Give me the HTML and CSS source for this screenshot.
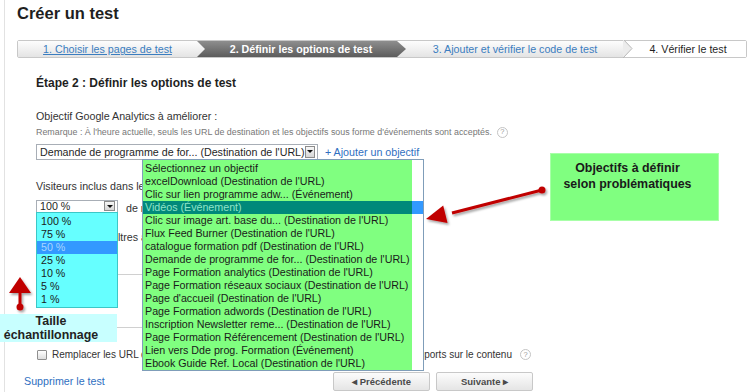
FILE: index.html
```html
<!DOCTYPE html>
<html lang="fr">
<head>
<meta charset="utf-8">
<title>Créer un test</title>
<link rel="stylesheet" href="styles.css">
</head>
<body>
<div class="page">
  <div class="head">
    <h1 class="title">Créer un test</h1>
    <div class="steps">
      <div class="step s1"><a href="#">1. Choisir les pages de test</a></div>
      <div class="step s2">2. Définir les options de test</div>
      <div class="step s3">3. Ajouter et vérifier le code de test
        <svg class="chev" width="10" height="18" viewBox="0 0 10 18"><path d="M0 -1 L9 8.5 L0 18" fill="#ececec" stroke="#b8b8b8" stroke-width="1"/></svg>
      </div>
      <div class="step s4">4. Vérifier le test</div>
    </div>
  </div>

  <div class="content">
    <h2 class="heading">Étape 2 : Définir les options de test</h2>

    <div class="label first">Objectif Google Analytics à améliorer :</div>
    <div class="note">Remarque : À l'heure actuelle, seuls les URL de destination et les objectifs sous forme d'événements sont acceptés. <span class="help">?</span></div>
    <div class="goal-row">
      <div class="select wide"><span>Demande de programme de for... (Destination de l'URL)</span><span class="dd"></span></div>
      <a href="#" class="add">+ Ajouter un objectif</a>
    </div>

    <div class="label visitors">Visiteurs inclus dans le test :</div>
    <div class="pct-row">
      <div class="select small"><span>100 %</span><span class="dd"></span></div>
      <span class="of">de nouveaux visiteurs</span>
    </div>
    <div class="filters">Filtres avancés</div>

    <div class="divider d1"></div>
    <div class="divider d2"></div>

    <div class="check-row">
      <span class="cb"></span>
      <span class="cb-label">Remplacer les URL des variantes de test par l'URL de la page d'origine dans les rapports sur le contenu</span>
      <span class="help">?</span>
    </div>
  </div>

  <div class="footer">
    <a href="#" class="delete">Supprimer le test</a>
    <div class="buttons">
      <button class="btn">◂ Précédente</button>
      <button class="btn">Suivante ▸</button>
    </div>
  </div>

  <!-- overlays -->
  <ul class="goal-list">
    <li>Sélectionnez un objectif</li>
    <li>excelDownload (Destination de l'URL)</li>
    <li>Clic sur lien programme adw... (Événement)</li>
    <li class="sel">Vidéos (Événement)</li>
    <li>Clic sur image art. base du... (Destination de l'URL)</li>
    <li>Flux Feed Burner (Destination de l'URL)</li>
    <li>catalogue formation pdf (Destination de l'URL)</li>
    <li>Demande de programme de for... (Destination de l'URL)</li>
    <li>Page Formation analytics (Destination de l'URL)</li>
    <li>Page Formation réseaux sociaux (Destination de l'URL)</li>
    <li>Page d'accueil (Destination de l'URL)</li>
    <li>Page Formation adwords (Destination de l'URL)</li>
    <li>Inscription Newsletter reme... (Destination de l'URL)</li>
    <li>Page Formation Référencement (Destination de l'URL)</li>
    <li>Lien vers Dde prog. Formation (Événement)</li>
    <li>Ebook Guide Ref. Local (Destination de l'URL)</li>
  </ul>

  <ul class="pct-list">
    <li>100 %</li>
    <li>75 %</li>
    <li class="sel">50 %</li>
    <li>25 %</li>
    <li>10 %</li>
    <li>5 %</li>
    <li>1 %</li>
  </ul>

  <div class="callout">Objectifs à définir<br>selon problématiques</div>

  <svg class="arrow-goal" width="140" height="50" viewBox="0 0 140 50">
    <defs>
      <filter id="sh" x="-20%" y="-40%" width="140%" height="180%">
        <feDropShadow dx="1.5" dy="2" stdDeviation="1.2" flood-color="#000" flood-opacity="0.35"/>
      </filter>
    </defs>
    <g filter="url(#sh)" fill="#c00000" stroke="#c00000">
      <line x1="122" y1="10" x2="32" y2="33" stroke-width="3"/>
      <circle cx="122" cy="10" r="3.5" stroke="none"/>
      <polygon points="6,39 27.6,43 23.2,25.5" stroke="none"/>
    </g>
  </svg>

  <svg class="arrow-up" width="30" height="40" viewBox="0 0 30 40">
    <g filter="url(#sh)" fill="#c00000">
      <polygon points="14,2 25,18 3,18"/>
      <rect x="12.5" y="17" width="3" height="14"/>
      <circle cx="14" cy="32" r="3.5"/>
    </g>
  </svg>

  <div class="sample">Taille<br>échantillonnage</div>
</div>
</body>
</html>
```

FILE: styles.css
```css
* { box-sizing: border-box; }

body {
  margin: 0;
  background: #fff;
  font-family: "Liberation Sans", Arial, sans-serif;
  color: #222;
}

.page {
  position: relative;
  width: 750px;
  height: 392px;
  overflow: hidden;
}

.page::before {
  content: "";
  position: absolute;
  left: 4px;
  top: 0;
  bottom: 0;
  width: 1px;
  background: #e2e2e2;
}

/* header */
.head { padding-left: 17px; }

.title {
  margin: 0;
  padding-top: 3px;
  font-size: 16.5px;
  line-height: 20px;
  font-weight: bold;
  color: #1f1f1f;
}

.steps {
  display: flex;
  margin-top: 17px;
  width: 730px;
  height: 18px;
  border: 1px solid #c8c8c8;
  border-radius: 2px;
  font-size: 10.7px;
}

.step {
  position: relative;
  line-height: 16px;
  text-align: center;
  white-space: nowrap;
}

.s1 { width: 179px; background: linear-gradient(#fdfdfd, #e4e4e4); }
.s1 a { color: #3b7dbf; text-decoration: underline; }
.s1::after {
  content: "";
  position: absolute;
  top: 0;
  right: -8px;
  width: 8px;
  height: 16px;
  background: linear-gradient(#fdfdfd, #e4e4e4);
  clip-path: polygon(0 0, 100% 50%, 0 100%);
  z-index: 2;
}

.s2 {
  width: 200px;
  padding-left: 8px;
  background: linear-gradient(#8e8e8e, #5c5c5c);
  color: #fff;
  font-weight: bold;
}
.s2::after {
  content: "";
  position: absolute;
  top: 0;
  right: -9px;
  width: 9px;
  height: 16px;
  background: linear-gradient(#8e8e8e, #5c5c5c);
  clip-path: polygon(0 0, 100% 50%, 0 100%);
  z-index: 2;
}

.s3 {
  width: 227px;
  padding-left: 9px;
  background: linear-gradient(#fdfdfd, #e4e4e4);
  color: #3b7dbf;
}
.chev {
  position: absolute;
  top: -1px;
  right: -9px;
  z-index: 2;
}

.s4 { flex: 1; background: #fff; color: #1f1f1f; padding-left: 6px; }

/* content */
.content { padding-left: 36px; }

.heading {
  margin: 18px 0 0;
  font-size: 12px;
  line-height: 15px;
  font-weight: bold;
  color: #1f1f1f;
}

.label {
  font-size: 10.7px;
  line-height: 13px;
  color: #333;
  white-space: nowrap;
}
.label.first { margin-top: 19px; }
.label.visitors { margin-top: 20.5px; }

.note {
  margin-top: 3px;
  display: flex;
  align-items: center;
  gap: 5px;
  font-size: 8.9px;
  line-height: 12px;
  color: #777;
  white-space: nowrap;
}

.help {
  display: inline-flex;
  align-items: center;
  justify-content: center;
  width: 11px;
  height: 11px;
  border: 1px solid #c4c4c4;
  border-radius: 50%;
  font-size: 7.5px;
  color: #9a9a9a;
  line-height: 1;
}

.goal-row {
  margin-top: 5.5px;
  display: flex;
  align-items: center;
  gap: 7px;
}

.select {
  display: flex;
  align-items: center;
  justify-content: space-between;
  border: 1px solid #a8aeb6;
  background: #fff;
  font-size: 10.7px;
  color: #1f1f1f;
  white-space: nowrap;
}
.select.wide { width: 282px; height: 16px; padding: 0 2px 0 3px; }
.select.small { width: 82px; height: 13px; padding: 0 2px 0 3px; }

.dd {
  position: relative;
  width: 12px;
  height: 12px;
  border: 1px solid #8c8c8c;
  background: linear-gradient(#f7f7f7, #d6d6d6);
}
.select.small .dd { width: 11px; height: 10px; }
.dd::after {
  content: "";
  position: absolute;
  left: 50%;
  top: 50%;
  margin: -1.5px 0 0 -3px;
  border-top: 3.5px solid #111;
  border-left: 3px solid transparent;
  border-right: 3px solid transparent;
}

.add {
  font-size: 10.7px;
  color: #2f6fbf;
  text-decoration: none;
  white-space: nowrap;
}

.pct-row {
  margin-top: 5.5px;
  display: flex;
  align-items: center;
  gap: 8px;
}
.of { font-size: 10.7px; color: #333; padding-top: 3px; white-space: nowrap; }

.filters {
  margin-top: 17.5px;
  padding-left: 73px;
  font-size: 10.7px;
  line-height: 13px;
  color: #333;
  white-space: nowrap;
}

.divider { width: 380px; height: 1px; background: #d0d0d0; }
.divider.d1 { margin-top: 29.5px; }
.divider.d2 { margin-top: 52px; }

.check-row {
  margin-top: 20.5px;
  display: flex;
  align-items: center;
  height: 13px;
  font-size: 10px;
  color: #333;
  white-space: nowrap;
}
.cb {
  width: 10px;
  height: 10px;
  margin: 0 5px 0 1px;
  border: 1px solid #8f8f8f;
  border-radius: 1px;
  background: linear-gradient(#fff, #dedede);
}
.check-row .help { margin-left: 8px; }

/* footer */
.footer {
  margin-top: 10.5px;
  display: flex;
  align-items: center;
  padding-left: 24px;
  height: 19px;
}
.delete {
  flex: 0 0 309px;
  font-size: 10.7px;
  color: #2f6fbf;
  text-decoration: none;
}
.buttons { display: flex; gap: 6px; }
.btn {
  width: 97px;
  height: 19px;
  padding: 0;
  border: 1px solid #c8c8c8;
  border-radius: 2px;
  background: linear-gradient(#fcfcfc, #e5e5e5);
  font-family: "Liberation Sans", Arial, sans-serif;
  font-size: 9.5px;
  font-weight: bold;
  color: #4a4a4a;
}

/* overlays */
.goal-list {
  position: absolute;
  left: 142px;
  top: 159px;
  width: 282px;
  height: 212px;
  margin: 0;
  padding: 2px 0 0;
  list-style: none;
  border: 1px solid #7f9db9;
  background: linear-gradient(to right, #80ff80 269px, #fff 269px);
  font-size: 10.7px;
  line-height: 13px;
  color: #1a1a1a;
  z-index: 5;
}
.goal-list li { padding-left: 2px; white-space: nowrap; }
.goal-list li.sel {
  background: linear-gradient(to right, #00897a 269px, #3399ff 269px);
  color: #8fe3c8;
}

.pct-list {
  position: absolute;
  left: 36px;
  top: 212px;
  width: 82px;
  margin: 0;
  padding: 2px 0 1px;
  list-style: none;
  border: 1px solid #3cc7c7;
  background: #6ff;
  font-size: 10.7px;
  line-height: 13px;
  color: #1a1a1a;
  z-index: 5;
}
.pct-list li { padding-left: 4px; }
.pct-list li.sel { background: #3399ff; color: #a9d6ff; }

.callout {
  position: absolute;
  left: 550px;
  top: 153px;
  width: 169px;
  height: 68px;
  padding: 6px 14px 0 0;
  background: #80ff80;
  border: 1px solid #a8ffa8;
  font-size: 12.4px;
  font-weight: bold;
  line-height: 16px;
  text-align: center;
  color: #1a1a1a;
  z-index: 5;
}

.arrow-goal {
  position: absolute;
  left: 420px;
  top: 180px;
  z-index: 6;
}

.arrow-up {
  position: absolute;
  left: 6px;
  top: 275px;
  z-index: 6;
}

.sample {
  position: absolute;
  left: 0;
  top: 314px;
  width: 117px;
  height: 28px;
  padding-right: 15px;
  background: #c8ffff;
  font-size: 12.4px;
  font-weight: bold;
  line-height: 14px;
  text-align: center;
  color: #222;
  z-index: 4;
}
```
